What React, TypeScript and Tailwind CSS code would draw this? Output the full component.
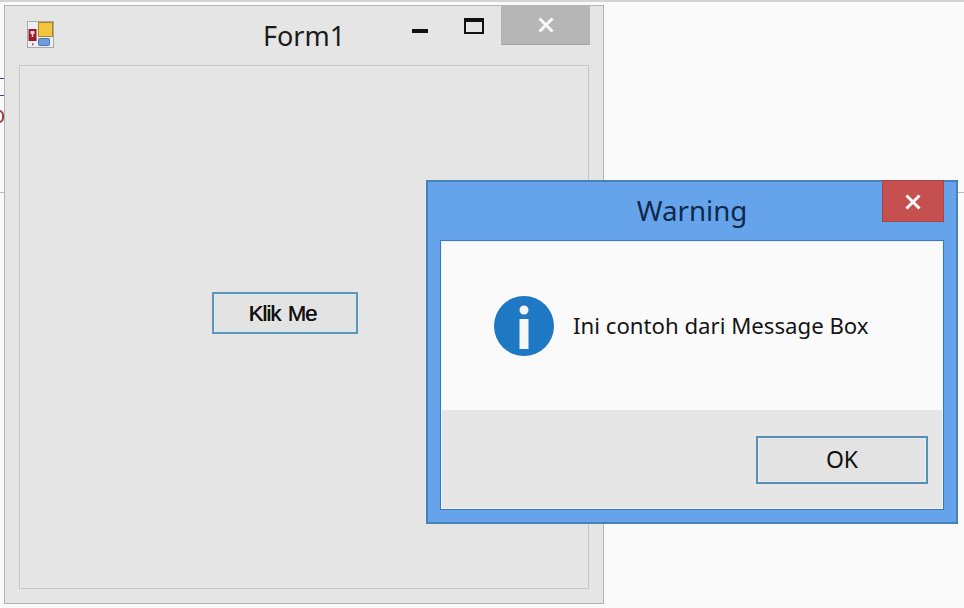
const segoe = "font-['Noto_Sans',sans-serif]";

function FormIcon() {
  return (
    <svg width="27" height="27" viewBox="0 0 27 27" className="block">
      <rect x="0.5" y="0.5" width="26" height="26" fill="#eceef2" stroke="#a9a9a9" />
      <rect x="11.5" y="1.5" width="14" height="14" fill="#f2c53d" stroke="#a58a2c" />
      <rect x="1.5" y="8" width="8" height="12" fill="#9c1a28" />
      <rect x="3.5" y="10" width="4" height="3" fill="#f0d0d0" />
      <rect x="4.7" y="13" width="1.6" height="3" fill="#f0d0d0" />
      <rect x="5" y="22" width="1.5" height="2.5" fill="#9c6a70" />
      <rect x="11.5" y="17.5" width="11" height="7" rx="1" fill="#6f9bd8" stroke="#4b74ad" />
    </svg>
  );
}

function CloseGlyph() {
  return (
    <svg width="16" height="16" viewBox="0 0 16 16" className="block">
      <path d="M1.5 1.5 L14.5 14.5 M14.5 1.5 L1.5 14.5" stroke="#fafafa" strokeWidth="3" fill="none" />
    </svg>
  );
}

function InfoIcon() {
  return (
    <svg width="60" height="60" viewBox="0 0 60 60" className="block shrink-0">
      <circle cx="30" cy="30" r="30" fill="#1f78c3" />
      <circle cx="30" cy="14" r="4.5" fill="#f4f6f8" />
      <rect x="25.5" y="23" width="9" height="30" fill="#f4f6f8" />
    </svg>
  );
}

export default function App() {
  return (
    <div className="relative w-[964px] h-[608px] overflow-hidden bg-[#fafafa] text-[#111]">
      {/* bits of the page behind the windows */}
      <div className="absolute left-0 top-0 w-full h-[2px] bg-[#d4d4d4]" />
      <div className="absolute left-0 top-[192px] w-full h-px bg-[#bdbdbd]" />
      <div className="absolute left-0 top-[78px] w-[4px] h-[18px] border-y border-[#3a3a9a]" />
      <div className="absolute left-[-6px] top-[110px] w-[10px] h-[13px] rounded-full border-2 border-[#a04040]" />

      {/* Form1 window */}
      <div className="absolute left-[4px] top-[5px] w-[600px] h-[599px] flex flex-col bg-[#e5e5e5] border border-[#b4b4b4]">
        <div className="relative h-[59px] shrink-0 grid grid-cols-[1fr_auto_1fr] items-start">
          <div className="pl-[22px] pt-[15px]">
            <FormIcon />
          </div>
          <div className={`${segoe} text-[27px] leading-none pt-[16px] text-[#1a1a1a]`}>Form1</div>
          <div className="flex justify-end items-start">
            <div className="mt-[23px] w-[16px] h-[4px] bg-[#111]" />
            <div className="ml-[36px] mt-[12px] w-[20px] h-[16px] border-2 border-t-[4px] border-[#111]" />
            <div className="ml-[17px] mr-[13px] -mt-px w-[89px] h-[40px] flex items-center justify-center bg-[#b7b6b6] border-b border-[#a5a5a5]">
              <CloseGlyph />
            </div>
          </div>
        </div>
        <div className="mx-[14px] h-[524px] pl-[192px] pt-[226px] bg-[#e6e5e5] border border-[#c6c6c6] shadow-[inset_1px_1px_0_#ebebeb]">
          <button className="w-[146px] h-[42px] pr-[5px] flex items-center justify-center bg-[#e3e3e3] border-2 border-[#5b97b8] shadow-[inset_0_0_0_1px_#d6eaf2] font-['Liberation_Sans',sans-serif] text-[22px] tracking-[-0.9px] [word-spacing:2px] [text-shadow:0.4px_0_0_#111] text-[#111]">
            Klik Me
          </button>
        </div>
      </div>

      {/* Warning message box */}
      <div className="absolute left-[426px] top-[180px] w-[532px] h-[344px] flex flex-col bg-[#65a3ea] border-2 border-[#4a7fb8]">
        <div className="relative h-[58px] shrink-0 flex items-start justify-center">
          <div className={`${segoe} text-[27.7px] leading-none pt-[15px] text-[#10294a]`}>Warning</div>
          <div className="absolute right-[12px] -top-[2px] w-[62px] h-[42px] pt-[2px] flex items-center justify-center bg-[#c64f50] border border-[#a84446]">
            <CloseGlyph />
          </div>
        </div>
        <div className="mx-[12px] h-[270px] flex flex-col p-px bg-[#eaf5fb] border border-[#3f78b4]">
          <div className="h-[168px] shrink-0 flex items-center gap-[19px] pl-[52px] bg-[#fafafa]">
            <InfoIcon />
            <span className={`${segoe} text-[22.2px] leading-none text-[#151515]`}>Ini contoh dari Message Box</span>
          </div>
          <div className="flex-1 flex justify-end items-start pt-[26px] pr-[14px] bg-[#e6e6e6]">
            <button className={`${segoe} w-[172px] h-[48px] pb-[2px] flex items-center justify-center bg-[#e3e3e3] border-2 border-[#5b8fb0] shadow-[inset_0_0_0_1px_#dff1f7] text-[23px] text-[#111]`}>
              OK
            </button>
          </div>
        </div>
      </div>
    </div>
  );
}
